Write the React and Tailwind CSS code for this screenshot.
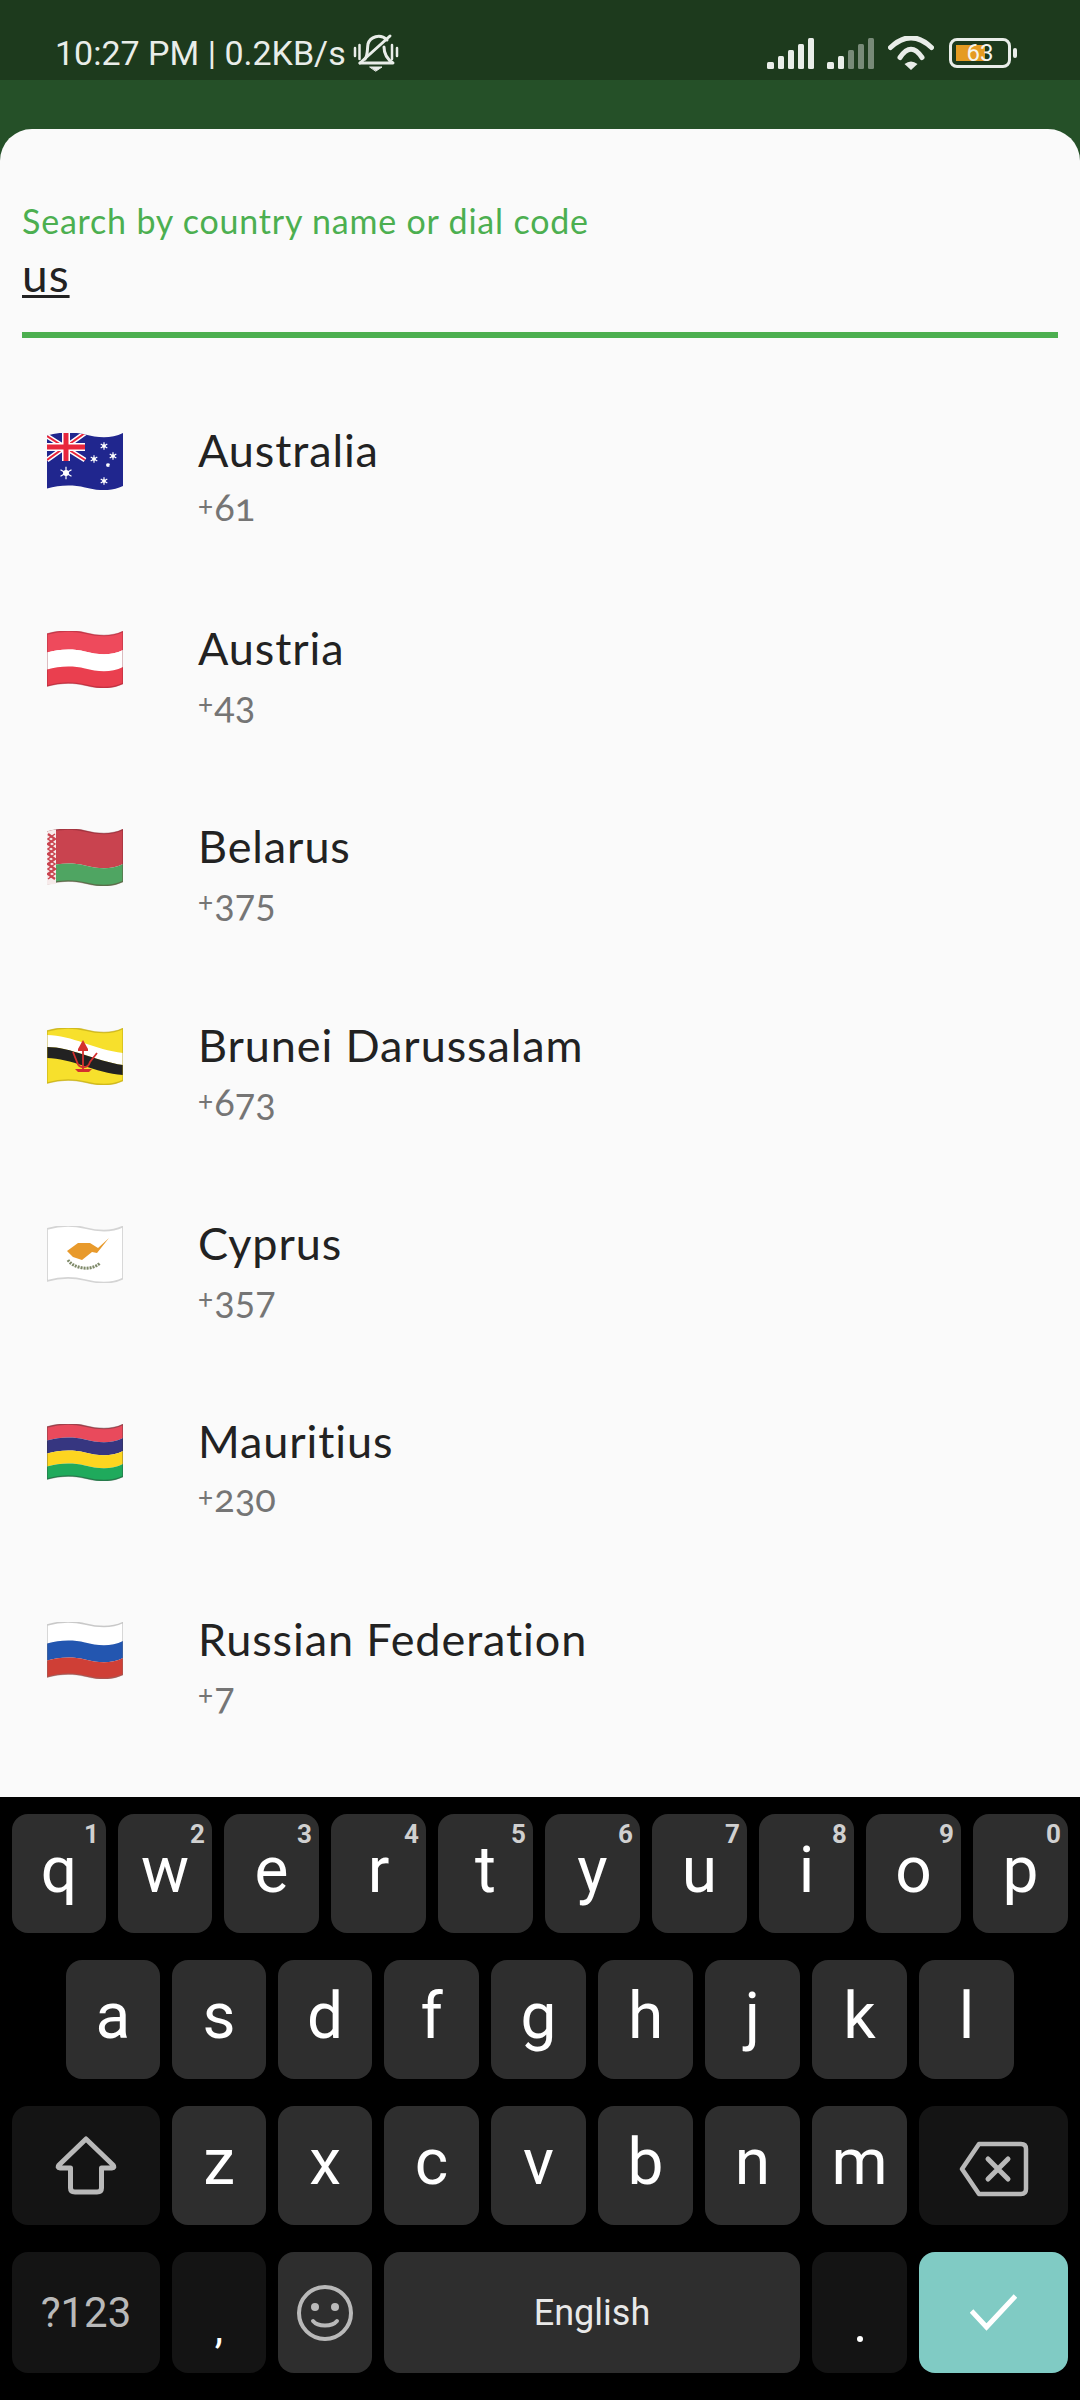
import React from "react";

const wave = (y) =>
  `M0 ${y + 2.5} C12 ${y - 1} 26 ${y - 1.5} 38 ${y + 1.5} S64 ${y + 6} 76 ${y}`;
const waveBack = (y) =>
  `L76 ${y} C64 ${y + 6} 50 ${y + 4.5} 38 ${y + 1.5} C26 ${y - 1.5} 12 ${y - 1} 0 ${y + 2.5} Z`;
const band = (a, b) => `${wave(a)} ${waveBack(b)}`;

const Bands = ({ stops, edge }) => (
  <>
    {stops.map(([a, b, color]) => (
      <path key={a} d={band(a, b)} fill={color} />
    ))}
    <path d={band(0.5, 52.5)} fill="none" stroke={edge} strokeOpacity="0.4" strokeWidth="1.5" />
  </>
);

const Star = ({ x, y, r = 3 }) => (
  <g>
    <circle cx={x} cy={y} r={r * 0.6} fill="#fff" />
    <path
      d={`M${x} ${y - r * 1.25}V${y + r * 1.25}M${x - r * 1.1} ${y - r * 0.65}L${x + r * 1.1} ${y + r * 0.65}M${x - r * 1.1} ${y + r * 0.65}L${x + r * 1.1} ${y - r * 0.65}`}
      stroke="#fff"
      strokeWidth="1.2"
    />
  </g>
);

const Flag = ({ children }) => (
  <svg viewBox="0 0 76 57" className="w-[76px] h-[57px] shrink-0">
    {children}
  </svg>
);

const flags = {
  au: (
    <Flag>
      <clipPath id="au-union">
        <path d={band(0, 53)} />
      </clipPath>
      <path d={band(0, 53)} fill="#20268e" />
      <g clipPath="url(#au-union)">
        <path d="M0 3L38 27M38 0L0 27" stroke="#fff" strokeWidth="5" />
        <path d="M0 3L38 27M38 0L0 27" stroke="#e8263c" strokeWidth="2" />
        <path d="M19 -2V28M0 14H38" stroke="#fff" strokeWidth="8" />
        <path d="M19 -2V28M0 14H38" stroke="#e8263c" strokeWidth="5" />
      </g>
      <Star x={19} y={40} r={5} />
      <Star x={57} y={13} />
      <Star x={66} y={23} />
      <Star x={47} y={26} />
      <Star x={61} y={32} r={1.6} />
      <Star x={57} y={48} />
    </Flag>
  ),
  at: (
    <Flag>
      <Bands stops={[[0, 19, "#ee4a5c"], [19, 36, "#ffffff"], [36, 53, "#ea3f4f"]]} edge="#8a1f2c" />
    </Flag>
  ),
  by: (
    <Flag>
      <Bands stops={[[0, 35, "#c9434f"], [35, 53, "#4fa562"]]} edge="#6b1f28" />
      <path d="M0 2.5 C3 1.5 6 1 9 .5 V55 C6 55 3 55.5 0 56Z" fill="#f6eaea" />
      <path d="M1 5L8 10L1 15L8 20L1 25L8 30L1 35L8 40L1 45L8 50" fill="none" stroke="#c9434f" strokeWidth="2.2" />
      <path d="M8 5L1 10L8 15L1 20L8 25L1 30L8 35L1 40L8 45L1 50" fill="none" stroke="#c9434f" strokeWidth="1.4" />
    </Flag>
  ),
  bn: (
    <Flag>
      <path d={band(0, 53)} fill="#f7e02c" />
      <path d="M0 7 C25 7 48 22 76 25 V37 C48 33 24 19 0 19Z" fill="#ffffff" />
      <path d="M0 19 C24 19 48 33 76 37 V47 C48 45 24 30 0 30Z" fill="#222222" />
      <g fill="none" stroke="#d4302f" strokeWidth="1.8">
        <path d="M26 24 L30 34 C32 41 41 41 43 34 L50 25" />
        <path d="M36 14 V41 M31 22 L41 22" />
      </g>
      <path d="M36 12 L41 21 H31Z" fill="#d4302f" />
      <path d="M28 41 H45 L42 44 H31Z" fill="#d4302f" />
      <path d={band(0.5, 52.5)} fill="none" stroke="#b39a10" strokeOpacity="0.55" strokeWidth="1.5" />
    </Flag>
  ),
  cy: (
    <Flag>
      <path d={band(0.5, 52.5)} fill="#ffffff" stroke="#d4d4d4" strokeWidth="1.8" />
      <path d="M20 25 L31 17 L43 17 L51 22 L62 12 L50 27 L45 26 L35 34 L26 31Z" fill="#e89a2c" />
      <path d="M21 34 C26 42 44 46 53 37" fill="none" stroke="#7f8a6a" strokeWidth="3" strokeDasharray="2 1" />
    </Flag>
  ),
  mu: (
    <Flag>
      <Bands stops={[[0, 14, "#e94a5c"], [14, 27, "#363680"], [27, 40, "#fdd520"], [40, 53, "#1faa5c"]]} edge="#333333" />
    </Flag>
  ),
  ru: (
    <Flag>
      <Bands stops={[[0, 19, "#ffffff"], [19, 36, "#2356b0"], [36, 53, "#cf3f36"]]} edge="#777777" />
    </Flag>
  ),
};

const countries = [
  ["au", "Australia", "61"],
  ["at", "Austria", "43"],
  ["by", "Belarus", "375"],
  ["bn", "Brunei Darussalam", "673"],
  ["cy", "Cyprus", "357"],
  ["mu", "Mauritius", "230"],
  ["ru", "Russian Federation", "7"],
];

const letterKey = "bg-[#2e2e2e] text-white text-[64px] pb-[5px]";
const Key = ({ children, hint, narrow, className }) => (
  <div
    className={`relative h-full flex items-center justify-center rounded-[16px] font-['Roboto',sans-serif] ${
      className || `${letterKey} ${narrow ? "w-[94px]" : "flex-1"}`
    }`}
  >
    {hint && (
      <span className="absolute right-[7px] top-[7px] text-[26px] leading-[26px] font-bold text-[#d0d0d0]">{hint}</span>
    )}
    {children}
  </div>
);

const SignalBars = ({ dim }) => (
  <svg viewBox="0 0 48 31" className="w-12 h-[31px]" fill="#e9ede9">
    <rect x="0" y="24" width="7" height="7" rx="1.5" />
    <rect x="11" y="18" width="6" height="13" rx="1.5" />
    <rect x="21" y="12" width="6" height="19" rx="1.5" opacity={dim ? 0.45 : 1} />
    <rect x="31" y="6" width="6" height="25" rx="1.5" opacity={dim ? 0.45 : 1} />
    <rect x="41" y="0" width="6" height="31" rx="1.5" opacity={dim ? 0.45 : 1} />
  </svg>
);

export default function App() {
  return (
    <div className="w-[1080px] h-[2400px] flex flex-col bg-[#255028] font-['Lato',sans-serif] [font-variant-ligatures:none]">
      {/* status bar */}
      <div className="h-20 bg-[#1d3a1d] flex items-center pl-[55px] pr-[63px] pt-[26px] text-[#e9ede9]">
        <span className="font-['Roboto',sans-serif] text-[34px] leading-[40px]">10:27 PM | 0.2KB/s</span>
        <svg viewBox="0 0 65 55" className="w-[65px] h-[55px] -ml-[1px] -mr-[65px]" fill="none" stroke="#e9ede9" strokeWidth="3" strokeLinecap="round" strokeLinejoin="round">
          <path d="M20 33 C23 29 22 24 23 18 C25 11 35 7 42 14" />
          <path d="M39 21 C39 28 42 33 48 37 H15" />
          <path d="M15 37 L45 10" />
          <path d="M25 41 H37 L31 45Z" fill="#e9ede9" strokeWidth="1" />
          <path d="M10 22 V30 M14.5 19 V33 M47 19 V33 M52 22 V30" strokeWidth="2.5" />
        </svg>
        <div className="ml-auto flex items-center">
          <SignalBars />
          <div className="ml-3"><SignalBars dim /></div>
          <svg viewBox="0 0 46 34" className="w-[46px] h-[34px] ml-[13px]" fill="none" stroke="#e9ede9" strokeWidth="5" strokeLinecap="round">
            <path d="M2.5 11.5 Q23 -8 43.5 11.5" />
            <path d="M12 21.5 Q23 5 34 21.5" />
            <path d="M23 34 L16.5 28 Q23 23 29.5 28 Z" fill="#e9ede9" stroke="none" />
          </svg>
          <div className="ml-[15px] relative w-[62px] h-[30px] rounded-[8px] border-[3px] border-[#e9ede9] p-1">
            <div className="w-[29px] h-full bg-[#e59b22]" />
            <span className="absolute inset-0 flex items-center justify-center font-['Roboto',sans-serif] text-[24px] leading-none text-[#f5f5ee]">63</span>
          </div>
          <div className="ml-[2px] w-1 h-[10px] rounded-sm bg-[#e9ede9]" />
        </div>
      </div>
      <div className="h-[49px]" />

      {/* sheet */}
      <div className="flex-1 bg-[#fafafa] rounded-t-[32px] overflow-hidden">
        <div className="mx-[22px] h-[209px] border-b-[6px] border-[#4caf50] pt-[71px]">
          <div className="text-[#4caf50] text-[34px] leading-[42px] tracking-[0.8px]">Search by country name or dial code</div>
          <div className="text-[#222222] text-[46px] leading-[50px] tracking-[1px] mt-[8px] underline decoration-[3px] underline-offset-[3px]">us</div>
        </div>
        <div className="pt-[95px]">
          {countries.map(([code, name, dial]) => (
            <div key={code} className="h-[198.2px] flex pl-[47px]">
              {flags[code]}
              <div className="ml-[75px] -mt-[10px]">
                <div className="text-[45px] leading-[54px] tracking-[0.9px] text-[#222222]">{name}</div>
                <div className="text-[38px] leading-[46px] text-[#757575] mt-[4px] [font-variant-numeric:oldstyle-nums]">
                  <span className="text-[28px] align-[6px] mr-[1px]">+</span>{dial}
                </div>
              </div>
            </div>
          ))}
        </div>
      </div>

      {/* keyboard */}
      <div className="h-[603px] bg-black px-3 pt-[17px] flex flex-col">
        <div className="h-[119px] flex gap-3">
          {"qwertyuiop".split("").map((k, i) => (
            <Key key={k} narrow={i < 2} hint={String((i + 1) % 10)}>{k}</Key>
          ))}
        </div>
        <div className="h-[119px] mt-[27px] flex gap-3 px-[54px]">
          {"asdfghjkl".split("").map((k, i) => (
            <Key key={k} narrow={i < 3}>{k}</Key>
          ))}
        </div>
        <div className="h-[119px] mt-[27px] flex gap-3">
          <Key className="w-[148px] bg-[#141414]">
            <svg viewBox="0 0 62 59" className="w-[62px] h-[59px]" fill="none" stroke="#b9b9b9" strokeWidth="5" strokeLinejoin="round">
              <path d="M31 3 L58 29 Q60 32 57 32 H46.5 V52 Q46.5 56 42 56 H20 Q15.5 56 15.5 52 V32 H5 Q2 32 4 29 Z" />
            </svg>
          </Key>
          {"zxcvbnm".split("").map((k, i) => (
            <Key key={k} narrow={i < 2}>{k}</Key>
          ))}
          <Key className="w-[149px] bg-[#141414]">
            <svg viewBox="0 0 70 56" className="w-[70px] h-[56px] mt-[6px]" fill="none" stroke="#b9b9b9" strokeWidth="4.5" strokeLinejoin="round" strokeLinecap="round">
              <path d="M3 28 L20 3 H62 Q67 3 67 8 V48 Q67 53 62 53 H20 Z" />
              <path d="M29 18 L49 38 M49 18 L29 38" strokeWidth="5" />
            </svg>
          </Key>
        </div>
        <div className="h-[121px] mt-[27px] flex gap-3">
          <Key className="w-[148px] bg-[#141414] text-[42px] text-[#b9b9b9]">?123</Key>
          <Key className="w-[94px] bg-[#141414] text-white text-[42px]">
            <span className="mt-[32px]">,</span>
          </Key>
          <Key className="w-[94px] bg-[#2e2e2e]">
            <svg viewBox="0 0 58 58" className="w-[58px] h-[58px]" fill="none" stroke="#b9b9b9" strokeWidth="4">
              <circle cx="29" cy="29" r="26" />
              <circle cx="19" cy="23" r="4" fill="#b9b9b9" stroke="none" />
              <circle cx="39" cy="23" r="4" fill="#b9b9b9" stroke="none" />
              <path d="M17 37 C22 43 36 43 41 37" strokeLinecap="round" />
            </svg>
          </Key>
          <Key className="w-[416px] bg-[#2e2e2e] text-[36px] text-[#e8e8e8]">English</Key>
          <Key className="w-[95px] bg-[#141414]">
            <span className="w-[6px] h-[6px] rounded-full bg-white mt-[52px]" />
          </Key>
          <Key className="w-[149px] bg-[#80cbc4]">
            <svg viewBox="0 0 47 37" className="w-[47px] h-[37px]" fill="none" stroke="#fff" strokeWidth="5">
              <path d="M1.5 17 L16.5 33 L45.5 2" />
            </svg>
          </Key>
        </div>
      </div>
    </div>
  );
}
